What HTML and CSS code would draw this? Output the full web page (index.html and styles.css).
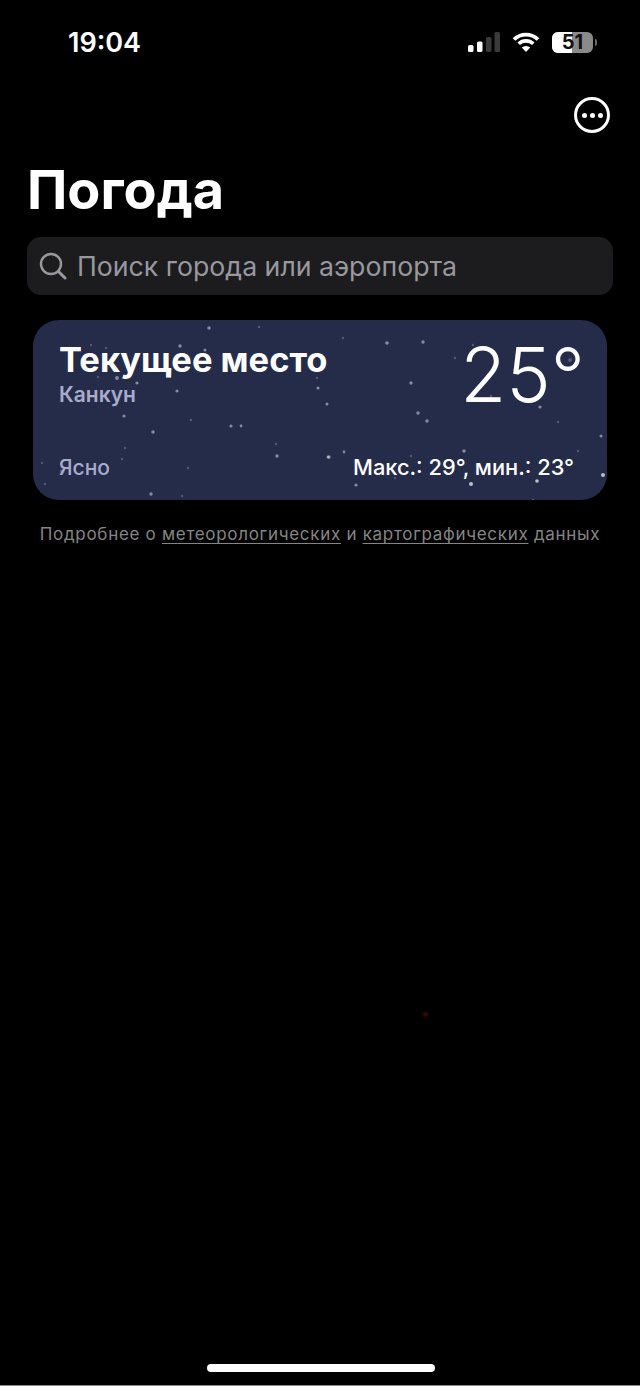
FILE: index.html
```html
<!DOCTYPE html>
<html>
<head>
  <title>Погода</title>
  <link rel="stylesheet" href="styles.css">
</head>
<body>

  <!-- status bar -->
  <div class="statusbar">
    <div class="time">19:04</div>
    <div class="status-icons">
      <svg class="signal" width="32" height="20" viewBox="0 0 32 20">
        <rect x="0" y="13" width="5.5" height="7" rx="1.5" fill="#fff"/>
        <rect x="9" y="9.5" width="5.5" height="10.5" rx="1.5" fill="#fff"/>
        <rect x="18" y="5" width="5.5" height="15" rx="1.5" fill="#3a3a3a"/>
        <rect x="26.500" y="0" width="5.5" height="20" rx="1.5" fill="#3a3a3a"/>
      </svg>
      <svg class="wifi" width="28" height="20" viewBox="0 0 28 20">
        <path d="M2 7.500 A17 17 0 0 1 26 7.500" fill="none" stroke="#fff" stroke-width="3.800" stroke-linecap="butt"/>
        <path d="M6.700 11.800 A10.500 10.500 0 0 1 21.300 11.800" fill="none" stroke="#fff" stroke-width="3.600"/>
        <path d="M14 20 L9.800 15.600 A6 6 0 0 1 18.200 15.600 Z" fill="#fff"/>
      </svg>
      <div class="battery">
        <div class="battery-body">
          <div class="battery-fill"></div>
          <span class="battery-text">51</span>
        </div>
        <div class="battery-cap"></div>
      </div>
    </div>
  </div>

  <div class="toolbar">
    <div class="more-btn">
      <span></span><span></span><span></span>
    </div>
  </div>

  <h1 class="title">Погода</h1>

  <div class="search">
    <svg class="search-icon" width="28" height="28" viewBox="0 0 28 28">
      <circle cx="12" cy="12" r="10" fill="none" stroke="#98989e" stroke-width="2.400"/>
      <path d="M19.500 19.500 L26 26" stroke="#98989e" stroke-width="3" stroke-linecap="round"/>
    </svg>
    <span class="search-text">Поиск города или аэропорта</span>
  </div>

  <div class="card">
    <svg class="stars" width="574" height="180" viewBox="0 0 574 180">
      <g class="star-dim">
        <circle cx="226" cy="7" r="1.300"/><circle cx="58" cy="25" r="1.200"/><circle cx="73" cy="28" r="1.200"/>
        <circle cx="65" cy="57" r="1.200"/><circle cx="284" cy="58" r="1.200"/><circle cx="158" cy="100" r="1.200"/>
        <circle cx="243" cy="124" r="1.200"/><circle cx="92" cy="128" r="1.200"/><circle cx="89" cy="139" r="1.200"/>
        <circle cx="9" cy="143" r="1.200"/><circle cx="155" cy="148" r="1.200"/><circle cx="28" cy="151" r="1.200"/>
        <circle cx="12" cy="164" r="1.200"/><circle cx="149" cy="176" r="1.200"/><circle cx="310" cy="18" r="1.200"/>
        <circle cx="422" cy="38" r="1.200"/><circle cx="440" cy="25" r="1.200"/><circle cx="458" cy="76" r="1.200"/>
        <circle cx="525" cy="102" r="1.200"/><circle cx="378" cy="136" r="1.200"/><circle cx="545" cy="131" r="1.200"/>
        <circle cx="500" cy="180" r="1.200"/><circle cx="362" cy="158" r="1.200"/><circle cx="537" cy="40" r="2"/>
      </g>
      <g class="star">
        <circle cx="147" cy="26" r="1.700"/><circle cx="172" cy="30" r="1.500"/><circle cx="84" cy="58" r="1.900"/>
        <circle cx="104" cy="63" r="1.600"/><circle cx="144" cy="71" r="1.600"/><circle cx="285" cy="68" r="1.600"/>
        <circle cx="294" cy="84" r="1.500"/><circle cx="91" cy="96" r="1.600"/><circle cx="198" cy="106" r="1.600"/>
        <circle cx="208" cy="106" r="1.400"/><circle cx="120" cy="112" r="1.800"/><circle cx="244" cy="136" r="1.700"/>
        <circle cx="295" cy="137" r="1.500"/><circle cx="118" cy="174" r="1.700"/><circle cx="354" cy="23" r="1.800"/>
        <circle cx="390" cy="22" r="1.700"/><circle cx="378" cy="63" r="1.700"/><circle cx="385" cy="93" r="1.700"/>
        <circle cx="394" cy="101" r="1.700"/><circle cx="507" cy="87" r="1.600"/><circle cx="568" cy="116" r="1.500"/>
        <circle cx="431" cy="131" r="1.800"/><circle cx="296" cy="137" r="1.700"/><circle cx="311" cy="132" r="1.400"/>
        <circle cx="323" cy="165" r="1.600"/><circle cx="176" cy="8" r="1.800"/>
      </g>
      <g class="star-bright">
        <circle cx="570" cy="155" r="2"/><circle cx="438" cy="164" r="2"/><circle cx="504" cy="161" r="1.800"/>
      </g>
    </svg>
    <div class="card-row">
      <div>
        <div class="card-title">Текущее место</div>
        <div class="card-city">Канкун</div>
      </div>
      <div class="card-temp">25°</div>
    </div>
    <div class="card-row card-bottom">
      <div class="card-cond">Ясно</div>
      <div class="card-range">Макс.: 29°, мин.: 23°</div>
    </div>
  </div>

  <p class="note">Подробнее о <u>метеорологических</u> и <u>картографических</u> данных</p>

  <div class="red-dot"></div>
  <div class="home-bar"></div>
  <div class="bottom-line"></div>

</body>
</html>
```

FILE: styles.css
```css
html, body { height: 100%; }
body {
  font-family: Inter, "Liberation Sans", sans-serif;
  background-color: #000;
  color: white;
  margin: 0;
  height: 1386px;
  overflow: hidden;
  position: relative;
}

.statusbar {
  display: flex;
  justify-content: space-between;
  align-items: center;
  height: 30px;
  padding: 27px 43px 0 68px;
}
.time {
  font-size: 27px;
  font-weight: 600;
}
.status-icons {
  display: flex;
  align-items: center;
  gap: 12px;
}
.battery {
  display: flex;
  align-items: center;
  gap: 2px;
}
.battery-body {
  position: relative;
  width: 41px;
  height: 21px;
  border-radius: 6px;
  background: #8a8a8a;
}
.battery-fill {
  width: 20px;
  height: 100%;
  background: #fff;
  border-radius: 6px 0 0 6px;
}
.battery-text {
  position: absolute;
  left: 0;
  right: 0;
  top: 0;
  text-align: center;
  font-size: 20px;
  line-height: 21px;
  font-weight: 700;
  color: #111;
}
.battery-cap {
  width: 2px;
  height: 7px;
  background: #6a6a6a;
  border-radius: 0 2px 2px 0;
}

.toolbar {
  display: flex;
  justify-content: flex-end;
  padding: 40px 30px 0 0;
}
.more-btn {
  width: 30px;
  height: 30px;
  border: 3px solid #fff;
  border-radius: 50%;
  display: flex;
  justify-content: center;
  align-items: center;
  gap: 3px;
}
.more-btn span {
  width: 5px;
  height: 5px;
  border-radius: 50%;
  background: #fff;
}

.title {
  font-size: 54px;
  line-height: 60px;
  font-weight: 700;
  margin: 27px 0 0 27px;
}

.search {
  display: flex;
  align-items: center;
  gap: 10px;
  height: 58px;
  margin: 17px 27px 0;
  padding-left: 12px;
  background: #1c1c1e;
  border-radius: 14px;
}
.search-text {
  font-size: 26.7px;
  color: #98989e;
}

.card {
  position: relative;
  height: 180px;
  margin: 25px 33px 0;
  box-sizing: border-box;
  padding: 20px 26px 0;
  background: #252c4a;
  border-radius: 26px;
  overflow: hidden;
}
.stars {
  position: absolute;
  left: 0;
  top: 0;
  filter: blur(0.4px);
}
.star-dim { fill: #fff; fill-opacity: 0.22; }
.star { fill: #fff; fill-opacity: 0.45; }
.star-bright { fill: #fff; fill-opacity: 0.7; }
.card-row {
  position: relative;
  display: flex;
  justify-content: space-between;
}
.card-title {
  font-size: 34.5px;
  line-height: 40px;
  font-weight: 700;
}
.card-city {
  font-size: 21px;
  line-height: 30px;
  font-weight: 600;
  color: #a9abca;
}
.card-temp {
  font-size: 75px;
  line-height: 70px;
  font-weight: 300;
  margin-right: -4px;
}
.card-bottom {
  margin-top: 44px;
  align-items: center;
}
.card-cond {
  font-size: 21px;
  font-weight: 500;
  color: #a9abca;
}
.card-range {
  font-size: 21.8px;
  font-weight: 500;
  margin-right: 7px;
}

.note {
  margin: 24px 0 0;
  text-align: center;
  font-size: 17px;
  color: #858585;
  letter-spacing: 0.7px;
  text-underline-offset: 3px;
}

.red-dot {
  position: absolute;
  left: 423px;
  top: 1012px;
  width: 5px;
  height: 5px;
  border-radius: 50%;
  background: #3a0c0e;
  filter: blur(1px);
}
.home-bar {
  position: absolute;
  left: 207px;
  top: 1364px;
  width: 228px;
  height: 8px;
  border-radius: 4px;
  background: #fff;
}
.bottom-line {
  position: absolute;
  left: 0;
  right: 0;
  bottom: 0;
  height: 1px;
  background: #8a8a8a;
}
```
